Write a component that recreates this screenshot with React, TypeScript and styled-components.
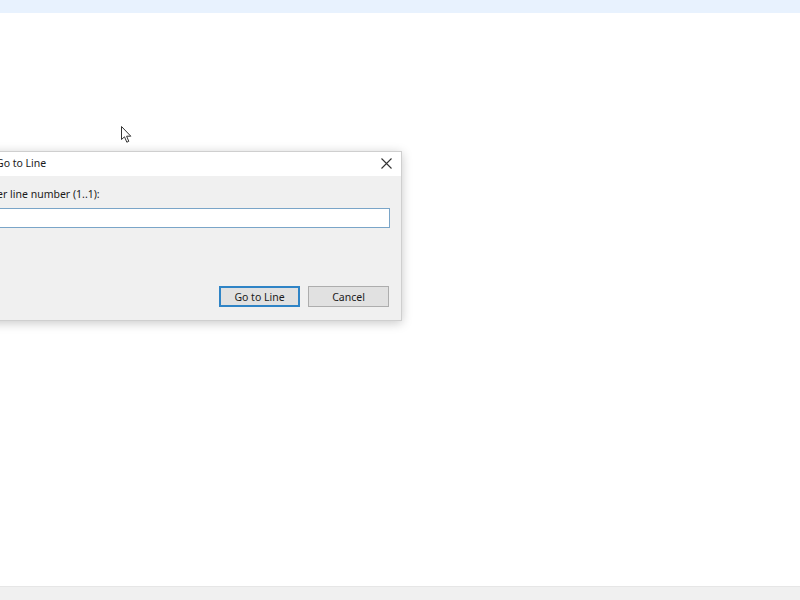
import React from "react";
import styled, { createGlobalStyle } from "styled-components";

const GlobalStyle = createGlobalStyle`
    html, body, #root {
        margin: 0;
        padding: 0;
        height: 100%;
        overflow: hidden;
    }
    body {
        font-family: "Segoe UI", "Noto Sans", "Liberation Sans", sans-serif;
        font-size: 10.5px;
        color: #000;
        background: #fff;
    }
`;

const Page = styled.div`
    position: relative;
    display: flex;
    flex-direction: column;
    height: 100vh;
    width: 800px;
`;

const TopStrip = styled.div`
    height: 13px;
    background: #e8f2fe;
`;

const Canvas = styled.div`
    position: relative;
    flex: 1;
    background: #fff;
`;

const BottomStrip = styled.div`
    height: 13px;
    background: #f0f0f0;
    border-top: 1px solid #e6e6e6;
`;

const Dialog = styled.div`
    position: absolute;
    left: -30px;
    top: 138px;
    width: 430px;
    height: 168px;
    display: flex;
    flex-direction: column;
    background: #f0f0f0;
    border: 1px solid #cfcfcf;
    box-shadow: 0 2px 10px rgba(0, 0, 0, 0.22);
`;

const TitleBar = styled.div`
    display: flex;
    align-items: center;
    justify-content: space-between;
    height: 24px;
    padding: 0 8px 2px 25px;
    box-sizing: border-box;
    background: #fff;
`;

const Title = styled.span`
    font-size: 10.5px;
    color: #1a1a1a;
`;

const CloseButton = styled.button`
    display: flex;
    align-items: center;
    justify-content: center;
    width: 14px;
    height: 14px;
    padding: 0;
    border: 0;
    background: transparent;
`;

const Body = styled.div`
    flex: 1;
    display: flex;
    flex-direction: column;
    padding: 11px 11px 13px 10px;
`;

const Label = styled.label`
    font-size: 10.5px;
    line-height: 14px;
    color: #1a1a1a;
    margin-bottom: 7px;
`;

const Field = styled.input`
    box-sizing: border-box;
    height: 20px;
    width: 100%;
    margin: 0;
    border: 1px solid #7aa5c8;
    background: #fff;
    outline: none;
`;

const ButtonRow = styled.div`
    margin-top: auto;
    display: flex;
    justify-content: flex-end;
    gap: 8px;
    padding-right: 1px;
`;

const DialogButton = styled.button<{ primary?: boolean }>`
    box-sizing: border-box;
    width: 81px;
    height: 21px;
    padding: 0;
    font-family: inherit;
    font-size: 10.5px;
    color: #1a1a1a;
    background: #e1e1e1;
    border: ${p => (p.primary ? "2px solid #2f84c6" : "1px solid #adadad")};
`;

const Cursor = styled.svg`
    position: absolute;
    left: 121px;
    top: 113px;
`;

export default function App() {
    return (
        <>
            <GlobalStyle />
            <Page>
                <TopStrip />
                <Canvas>
                    <Cursor width="12" height="18" viewBox="0 0 12 18">
                        <path
                            d="M0.5 0.5 L0.5 13.5 L3.5 10.8 L5.8 16.2 L7.8 15.3 L5.6 10.2 L9.8 10.2 Z"
                            fill="#fff"
                            stroke="#333"
                            strokeWidth="1"
                            strokeLinejoin="round"
                        />
                    </Cursor>
                    <Dialog>
                        <TitleBar>
                            <Title>Go to Line</Title>
                            <CloseButton aria-label="Close">
                                <svg width="11" height="11" viewBox="0 0 11 11">
                                    <path d="M0.5 0.5 L10.5 10.5 M10.5 0.5 L0.5 10.5" stroke="#333" strokeWidth="1.1" />
                                </svg>
                            </CloseButton>
                        </TitleBar>
                        <Body>
                            <Label>Enter line number (1..1):</Label>
                            <Field type="text" />
                            <ButtonRow>
                                <DialogButton primary>Go to Line</DialogButton>
                                <DialogButton>Cancel</DialogButton>
                            </ButtonRow>
                        </Body>
                    </Dialog>
                </Canvas>
                <BottomStrip />
            </Page>
        </>
    );
}
